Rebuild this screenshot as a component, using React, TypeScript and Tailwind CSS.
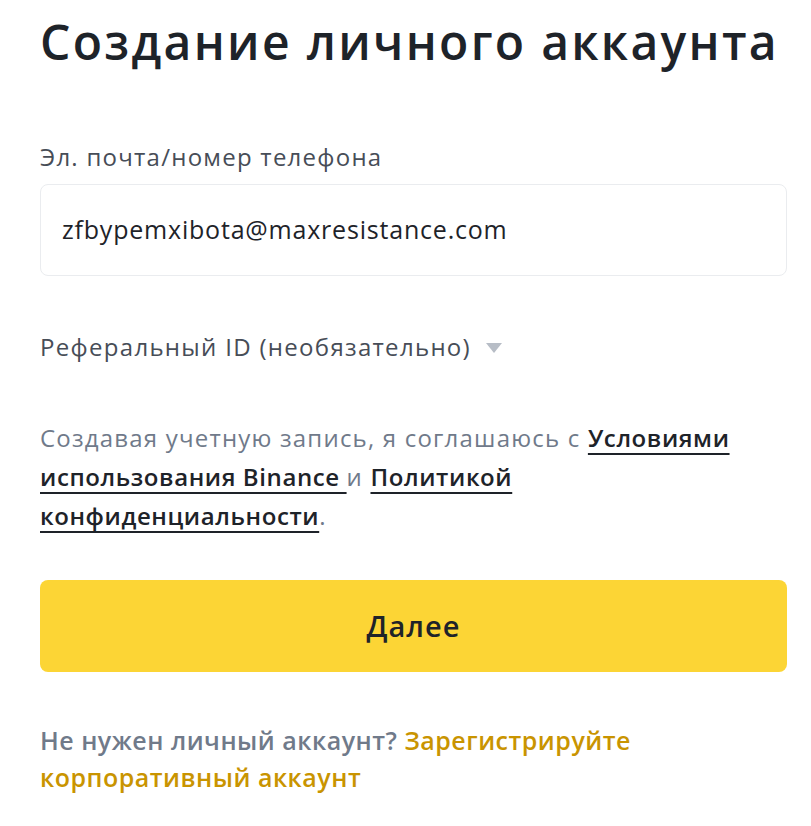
export default function App() {
  return (
    <div className="min-h-screen bg-white pl-10 pr-6 pt-[14px] font-['Open_Sans',sans-serif] text-[#1e2329]">
      <h1 className="text-[48px] font-semibold leading-[56px] tracking-[2.3px]">Создание личного аккаунта</h1>

      <div className="mt-[72px] text-[24px] leading-[30px] tracking-[1.25px] text-[#474d57]">Эл. почта/номер телефона</div>
      <div className="mt-[12px] flex h-[92px] items-center rounded-[8px] border border-[#eaecef] px-[21px] text-[25px] tracking-[0.8px] text-[#1e2329]">
        zfbypemxibota@maxresistance.com
      </div>

      <div className="mt-[56px] flex items-center gap-[14px] text-[24px] leading-[30px] tracking-[1.3px] text-[#474d57]">
        <span>Реферальный ID (необязательно)</span>
        <svg width="18" height="12" viewBox="0 0 18 12" className="mt-[2px]">
          <path d="M1 1h16L9 11z" fill="#b7bdc6" />
        </svg>
      </div>

      <p className="mt-[56px] text-[24px] leading-[39px] tracking-[1.2px] text-[#707a8a]">
        Создавая учетную запись, я соглашаюсь с{" "}
        <a className="font-semibold tracking-[0.6px] text-[#1e2329] underline decoration-[1.5px] underline-offset-[6px]">Условиями использования Binance </a>{" "}
        и <a className="font-semibold tracking-[0.6px] text-[#1e2329] underline decoration-[1.5px] underline-offset-[6px]">Политикой конфиденциальности</a>.
      </p>

      <button className="mt-[45px] flex h-[92px] w-full items-center justify-center rounded-[8px] bg-[#fcd535] text-[29px] font-semibold tracking-[1px] text-[#1e2329]">
        Далее
      </button>

      <p className="mt-[50px] text-[25px] font-semibold leading-[37px] tracking-[0.5px] text-[#707a8a]">
        Не нужен личный аккаунт? <a className="text-[#c99400]">Зарегистрируйте корпоративный аккаунт</a>
      </p>
    </div>
  );
}
